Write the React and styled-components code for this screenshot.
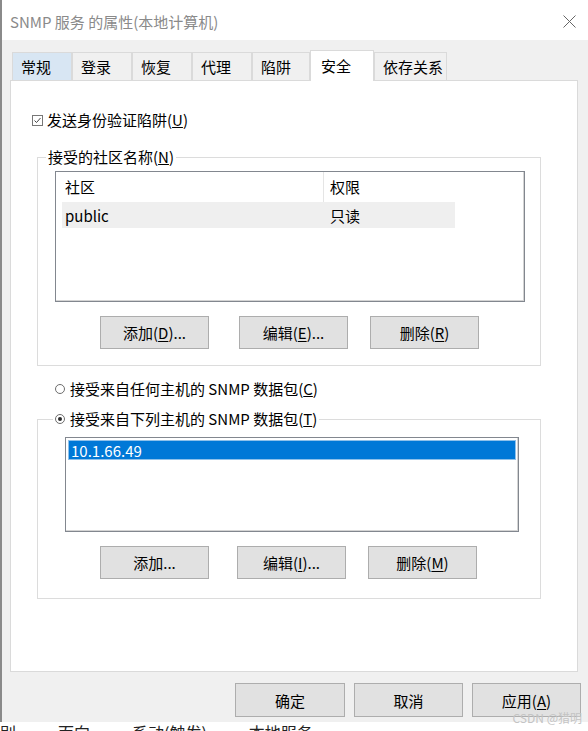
import React from "react"
import styled, { createGlobalStyle } from "styled-components"

const GlobalStyle = createGlobalStyle`
    html, body {
        margin: 0;
        padding: 0;
        background: #ffffff;
    }
    body {
        font-family: "Noto Sans CJK SC", "Microsoft YaHei", sans-serif;
        font-size: 15px;
        color: #000;
    }
`

const Screen = styled.div`
    position: relative;
    width: 588px;
    height: 731px;
    overflow: hidden;
    display: flex;
    flex-direction: column;
    background: #ffffff;
`

const TopEdge = styled.div`
    height: 3px;
    background: #ffffff;
    border-left: 2px solid #8a8a8a;
`

const BehindStrip = styled.div`
    height: 9px;
    overflow: hidden;
    white-space: nowrap;
    font-size: 16px;
    line-height: 20px;
    color: #222;

    span {
        display: inline-block;
        margin-top: -1px;
        margin-right: 42px;
    }
`

const Dialog = styled.div`
    flex: 0 0 719px;
    display: flex;
    flex-direction: column;
    border-left: 2px solid #8a8a8a;
    background: #f0f0f0;
`

const TitleBar = styled.div`
    height: 37px;
    display: flex;
    align-items: center;
    justify-content: space-between;
    padding: 0 12px 0 8px;
    background: #ffffff;
    color: #8a8a8a;
    font-size: 15px;
`

const Body = styled.div`
    flex: 1;
    display: flex;
    flex-direction: column;
    padding: 0 8px 0 8px;
`

const TabStrip = styled.div`
    display: flex;
    align-items: flex-end;
    height: 30px;
    margin-top: 10px;
    padding-left: 2px;
    position: relative;
    z-index: 1;
`

const Tab = styled.div`
    box-sizing: border-box;
    width: ${({ $w }) => $w}px;
    height: ${({ $active }) => ($active ? 31 : 28)}px;
    margin-bottom: ${({ $active }) => ($active ? -1 : 0)}px;
    display: flex;
    align-items: center;
    padding-left: ${({ $active }) => ($active ? 10 : 8)}px;
    padding-bottom: ${({ $active }) => ($active ? 2 : 0)}px;
    border: 1px solid #dadada;
    border-bottom: none;
    background: ${({ $active, $hover }) => ($active ? "#ffffff" : $hover ? "#d8e6f3" : "#f0f0f0")};
    color: #000;
`

const Panel = styled.div`
    box-sizing: border-box;
    width: 568px;
    height: 592px;
    background: #ffffff;
    border: 1px solid #dadada;
    display: flex;
    flex-direction: column;
    padding-left: 26px;
`

const CheckRow = styled.label`
    display: flex;
    align-items: center;
    gap: 4px;
    height: 20px;
    margin: 29px 0 17px -5px;
    line-height: 20px;
`

const RadioRow = styled.label`
    display: flex;
    align-items: center;
    gap: 5px;
    height: 20px;
    line-height: 20px;
    margin: ${({ $m }) => $m || 0};
`

const RadioDot = styled.span`
    box-sizing: border-box;
    width: 10px;
    height: 10px;
    border-radius: 50%;
    border: 1px solid #6d6d6d;
    background: #fff;
    display: flex;
    align-items: center;
    justify-content: center;

    &::after {
        content: "";
        width: 4px;
        height: 4px;
        border-radius: 50%;
        background: ${({ $on }) => ($on ? "#2b2b2b" : "transparent")};
    }
`

const Group = styled.fieldset`
    box-sizing: border-box;
    width: 504px;
    margin: 0;
    padding: ${({ $pad }) => $pad};
    border: 1px solid #dcdcdc;
    min-inline-size: 0;
`

const Legend = styled.legend`
    margin-left: ${({ $ml }) => $ml}px;
    padding: 0 2px;
    line-height: 20px;
    height: 20px;
`

const ListView = styled.div`
    box-sizing: border-box;
    width: ${({ $w }) => $w}px;
    height: ${({ $h }) => $h}px;
    border: 1px solid #82878f;
    box-shadow: inset -1px -1px 0 #d4d4d4;
    background: #fff;
    padding: ${({ $pad }) => $pad};
`

const HeaderRow = styled.div`
    display: grid;
    grid-template-columns: 267px 132px;
    height: 30px;
    align-items: center;

    span {
        padding-left: 9px;
        line-height: 30px;
    }
    span + span {
        border-left: 1px solid #e5e5e5;
        padding-left: 6px;
    }
`

const DataRow = styled.div`
    display: grid;
    grid-template-columns: 261px 132px;
    width: 393px;
    height: 26px;
    margin-left: 6px;
    align-items: center;
    background: #efefef;

    span {
        padding-left: 3px;
    }
    span + span {
        padding-left: 7px;
    }
`

const HostRow = styled.div`
    box-sizing: border-box;
    height: 20px;
    line-height: 19px;
    padding-left: 2px;
    background: #0078d7;
    border: 1px solid #8fc1ea;
    color: #fff;
`

const ButtonRow = styled.div`
    display: flex;
    margin-top: 14px;
    padding-left: ${({ $pl }) => $pl}px;
`

const Button = styled.button`
    box-sizing: border-box;
    width: ${({ $w }) => $w || 109}px;
    height: ${({ $h }) => $h || 33}px;
    margin-left: ${({ $ml }) => $ml || 0}px;
    border: 1px solid #adadad;
    background: #e1e1e1;
    font-family: inherit;
    font-size: 15px;
    color: #000;
    padding: 0;
    display: flex;
    align-items: center;
    justify-content: center;

    u {
        text-decoration: underline;
        text-underline-offset: 2px;
    }
`

const Footer = styled.div`
    display: flex;
    justify-content: flex-end;
    gap: 9px;
    margin-top: 11px;
    margin-right: -1px;
`

const Watermark = styled.div`
    position: absolute;
    right: 6px;
    bottom: 5px;
    font-family: "Noto Sans CJK SC", sans-serif;
    font-size: 12px;
    color: #c4c4c4;
`

const CheckIcon = () => (
    <svg width="11" height="11" viewBox="0 0 11 11">
        <rect x="0.5" y="0.5" width="10" height="10" fill="#fff" stroke="#777" />
        <path d="M2.5 5.5 L4.5 7.5 L8.5 3" fill="none" stroke="#444" strokeWidth="1" />
    </svg>
)

const CloseIcon = () => (
    <svg width="13" height="13" viewBox="0 0 13 13">
        <path d="M0.5 0.5 L12.5 12.5 M12.5 0.5 L0.5 12.5" stroke="#666" strokeWidth="1" />
    </svg>
)

const tabs = [
    { label: "常规", w: 60, hover: true },
    { label: "登录", w: 60 },
    { label: "恢复", w: 60 },
    { label: "代理", w: 60 },
    { label: "陷阱", w: 58 },
    { label: "安全", w: 64, active: true },
    { label: "依存关系", w: 73 },
]

const Key = ({ children }) => <u>{children}</u>

export default function App() {
    return (
        <Screen>
            <GlobalStyle />
            <TopEdge />
            <Dialog>
                <TitleBar>
                    <span>SNMP 服务 的属性(本地计算机)</span>
                    <CloseIcon />
                </TitleBar>
                <Body>
                    <TabStrip>
                        {tabs.map((t) => (
                            <Tab key={t.label} $w={t.w} $active={t.active} $hover={t.hover}>
                                {t.label}
                            </Tab>
                        ))}
                    </TabStrip>
                    <Panel>
                        <CheckRow>
                            <CheckIcon />
                            <span>
                                发送身份验证陷阱(<Key>U</Key>)
                            </span>
                        </CheckRow>

                        <Group $pad="4px 15px 16px 17px">
                            <Legend $ml={-9}>
                                接受的社区名称(<Key>N</Key>)
                            </Legend>
                            <ListView $w={470} $h={131} $pad="0">
                                <HeaderRow>
                                    <span>社区</span>
                                    <span>权限</span>
                                </HeaderRow>
                                <DataRow>
                                    <span>public</span>
                                    <span>只读</span>
                                </DataRow>
                            </ListView>
                            <ButtonRow $pl={45}>
                                <Button>
                                    添加(<Key>D</Key>)...
                                </Button>
                                <Button $ml={30}>
                                    编辑(<Key>E</Key>)...
                                </Button>
                                <Button $ml={22}>
                                    删除(<Key>R</Key>)
                                </Button>
                            </ButtonRow>
                        </Group>

                        <RadioRow $m="13px 0 10px 18px">
                            <RadioDot />
                            <span>
                                接受来自任何主机的 SNMP 数据包(<Key>C</Key>)
                            </span>
                        </RadioRow>

                        <Group $pad="8px 21px 19px 27px">
                            <Legend $ml={-12}>
                                <RadioRow as="span">
                                    <RadioDot $on />
                                    <span>
                                        接受来自下列主机的 SNMP 数据包(<Key>T</Key>)
                                    </span>
                                </RadioRow>
                            </Legend>
                            <ListView $w={454} $h={95} $pad="2px">
                                <HostRow>10.1.66.49</HostRow>
                            </ListView>
                            <ButtonRow $pl={35}>
                                <Button>添加...</Button>
                                <Button $ml={28}>
                                    编辑(<Key>I</Key>)...
                                </Button>
                                <Button $ml={22}>
                                    删除(<Key>M</Key>)
                                </Button>
                            </ButtonRow>
                        </Group>
                    </Panel>
                    <Footer>
                        <Button $w={110} $h={34}>
                            确定
                        </Button>
                        <Button $h={34}>取消</Button>
                        <Button $h={34}>
                            应用(<Key>A</Key>)
                        </Button>
                    </Footer>
                </Body>
            </Dialog>
            <BehindStrip>
                <span>别</span>
                <span>面向</span>
                <span>系动(触发)</span>
                <span>本地服务</span>
            </BehindStrip>
            <Watermark>CSDN @猎明</Watermark>
        </Screen>
    )
}
